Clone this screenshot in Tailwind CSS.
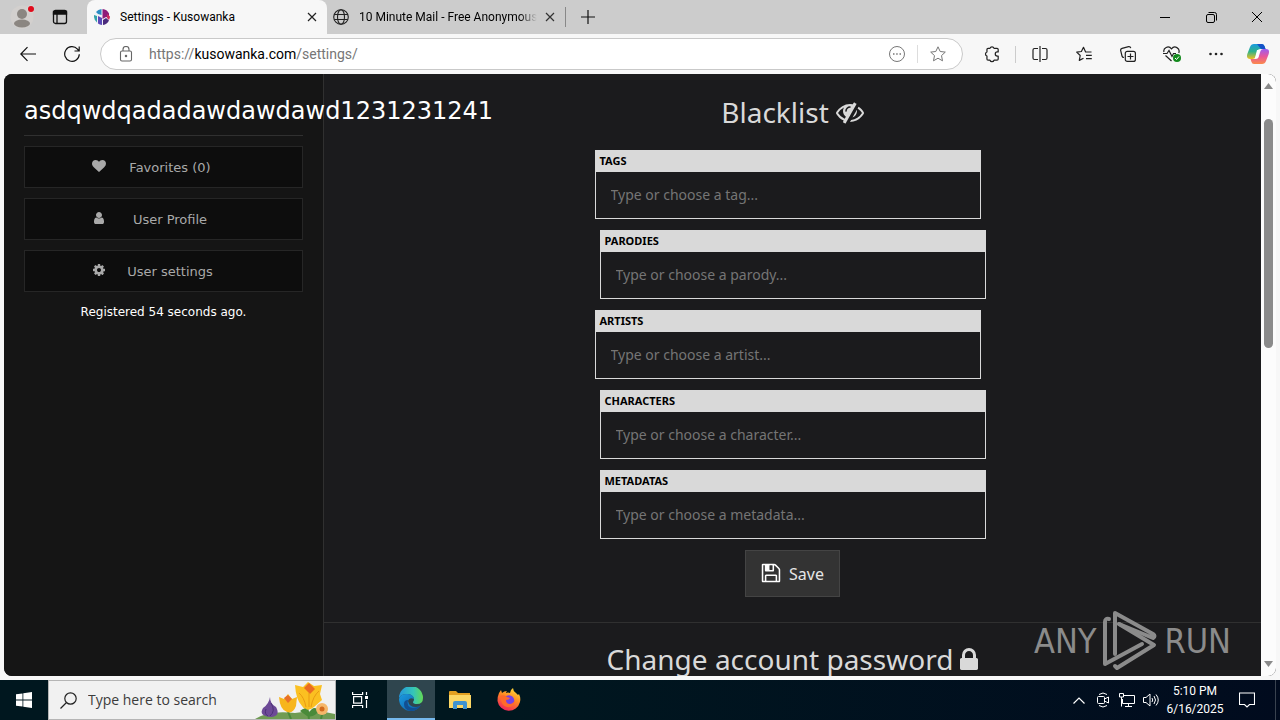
<!DOCTYPE html>
<html lang="en">
<head>
  <meta charset="UTF-8">
  <meta name="viewport" content="width=device-width, initial-scale=1.0">
  <title>Settings - Kusowanka</title>
  <script src="https://cdn.jsdelivr.net/npm/@tailwindcss/browser@4"></script>
</head>
<body class="flex flex-col h-screen overflow-hidden bg-[#f7f7f7] font-['Open_Sans',sans-serif] text-black">

  <!-- Tab strip -->
  <header class="flex h-[34px] shrink-0 bg-[#cccccc] font-['Roboto',sans-serif] text-xs">
    <div class="flex w-[87px] items-center">
      <button aria-label="Profile" class="ml-[10px] w-6">
        <svg class="w-6 h-6" viewBox="0 0 24 24">
          <circle cx="12" cy="12" r="11.5" fill="#d3d0ce"/>
          <circle cx="12" cy="9" r="5" fill="#8b8681"/>
          <ellipse cx="12" cy="18.500" rx="8" ry="4" fill="#8b8681"/>
          <circle cx="21" cy="4" r="4" fill="#d8d4d1"/>
          <circle cx="21" cy="4" r="3" fill="#e00b1c"/>
        </svg>
      </button>
      <button aria-label="Tab actions" class="ml-[18px]">
        <svg class="w-4 h-4" viewBox="0 0 16 16" fill="none" stroke="#111" stroke-width="1.3">
          <rect x="1.500" y="1.500" width="13" height="13" rx="2"/>
          <path d="M1.500 2.500h13v2.500h-13z" fill="#111"/>
          <path d="M5 5v9.500"/>
        </svg>
      </button>
    </div>
    <div class="flex w-60 items-center rounded-t-lg bg-[#f7f7f7] px-[7px]">
      <svg class="w-4 h-4 shrink-0" viewBox="0 0 16 16">
        <circle cx="8" cy="8" r="8" fill="#f1f1f6"/>
        <path d="M2 3A8 8 0 0 1 7.500 0v6L4 5z" fill="#2b8cc4"/>
        <path d="M8.500 0a8 8 0 0 1 6.500 4.500V9l-3-1-3.500 2z" fill="#8e1c78"/>
        <path d="M0 6l3 1v6.500A8 8 0 0 1 0 8z" fill="#35a3ab"/>
        <path d="M4 7l4 2v7a8 8 0 0 1-4-1.500z" fill="#5a49b8"/>
        <path d="M9 11l3-2 3 2.500A8 8 0 0 1 9 16z" fill="#4a2a7c"/>
        <path d="M13 5l3 2.500a8 8 0 0 1-1 3.500l-2-2z" fill="#cf2f5e"/>
      </svg>
      <span class="ml-[10px] grow truncate">Settings - Kusowanka</span>
      <button aria-label="Close tab" class="w-4">
        <svg class="mx-auto w-[10px] h-[10px]" viewBox="0 0 10 10" stroke="#222" stroke-width="1.2"><path d="M1 1l8 8M9 1l-8 8"/></svg>
      </button>
    </div>
    <div class="flex w-[239px] items-center pl-[6px]">
      <svg class="w-4 h-4 shrink-0" viewBox="0 0 16 16" fill="none" stroke="#222" stroke-width="1.1">
        <circle cx="8" cy="8" r="7.300"/><ellipse cx="8" cy="8" rx="3.500" ry="7.300"/><path d="M1.300 5.500h13.400M1.300 10.500h13.400"/>
      </svg>
      <span class="ml-[10px] w-[178px] overflow-hidden whitespace-nowrap [mask-image:linear-gradient(to_right,black_90%,transparent)]">10 Minute Mail - Free Anonymous</span>
      <button aria-label="Close tab" class="ml-[5px] w-4">
        <svg class="mx-auto w-[10px] h-[10px]" viewBox="0 0 10 10" stroke="#333" stroke-width="1.2"><path d="M1 1l8 8M9 1l-8 8"/></svg>
      </button>
      <span class="ml-auto h-5 w-px bg-[#888]"></span>
    </div>
    <button aria-label="New tab" class="w-11">
      <svg class="mx-auto w-[14px] h-[14px]" viewBox="0 0 14 14" stroke="#111" stroke-width="1.200"><path d="M7 0v14M0 7h14"/></svg>
    </button>
    <div class="ml-auto flex">
      <button aria-label="Minimize" class="w-[46px]"><svg class="mx-auto w-[10px] h-[10px]" viewBox="0 0 10 10" stroke="#000"><path d="M0 5.500h10"/></svg></button>
      <button aria-label="Restore" class="w-[46px]"><svg class="mx-auto w-[11px] h-[11px]" viewBox="0 0 11 11" fill="none" stroke="#000"><rect x=".5" y="2.500" width="8" height="8" rx="1.500"/><path d="M2.500 .5h6a2 2 0 0 1 2 2v6"/></svg></button>
      <button aria-label="Close" class="w-[46px]"><svg class="mx-auto w-[10px] h-[10px]" viewBox="0 0 10 10" stroke="#000"><path d="M0 0l10 10M10 0L0 10"/></svg></button>
    </div>
  </header>

  <!-- Toolbar -->
  <nav class="flex h-10 shrink-0 items-center">
    <button aria-label="Back" class="w-11 pl-3">
      <svg class="mx-auto w-4 h-4" viewBox="0 0 16 16" fill="none" stroke="#111" stroke-width="1.200"><path d="M16 8H.8M7.500 1.200L.8 8l6.700 6.800"/></svg>
    </button>
    <button aria-label="Refresh" class="ml-[6px] w-11">
      <svg class="mx-auto w-4 h-4" viewBox="0 0 16 16" fill="none" stroke="#111" stroke-width="1.200"><path d="M15.300 8.200A7.300 7.300 0 1 1 13.500 3.200L15 5M15.200 .5V5h-4.700"/></svg>
    </button>
    <div class="ml-[6px] flex h-8 grow items-center rounded-full border border-[#c9c9c9] bg-white pl-[18px] pr-4 font-['Roboto',sans-serif] text-sm">
      <svg class="w-[14px] h-4 shrink-0" viewBox="0 0 14 16" fill="none" stroke="#666" stroke-width="1.100"><rect x="1.500" y="5" width="11" height="10" rx="1.500"/><path d="M4 5V3.500a3 3 0 0 1 6 0V5"/><circle cx="7" cy="10" r=".7" fill="#666"/></svg>
      <a href="#" class="ml-4 grow text-[#767676]">https://<span class="text-black">kusowanka.com</span>/settings/</a>
      <button aria-label="Site options"><svg class="w-4 h-4" viewBox="0 0 16 16" fill="none" stroke="#777"><circle cx="8" cy="8" r="7.500"/><path d="M4 8h1.500M7.200 8h1.500M10.500 8H12" stroke-width="1.500"/></svg></button>
      <span class="mx-3 h-[18px] w-px bg-[#ddd]"></span>
      <button aria-label="Add to favorites"><svg class="w-4 h-4" viewBox="0 0 16 16" fill="none" stroke="#777" stroke-linejoin="round"><path d="M8 .8l2.200 4.700 5.100.6-3.800 3.500 1 5.200L8 12.200l-4.500 2.600 1-5.200L.7 6.100l5.100-.6z"/></svg></button>
    </div>
    <button aria-label="Extensions" class="ml-[7px] w-11"><svg class="mx-auto w-[18px] h-[18px]" viewBox="0 0 16 16" fill="none" stroke="#222" stroke-width="1.100" stroke-linejoin="round"><path d="M4.500 3H6.200a1.900 1.900 0 0 1 3.600 0H12.500a1 1 0 0 1 1 1V6.200h-.8a1.800 1.800 0 0 0 0 3.600h.8v2.700a1 1 0 0 1-1 1H9.800a1.900 1.900 0 0 1-3.600 0H4.500a1 1 0 0 1-1-1V9.800a1.900 1.900 0 0 1 0-3.600V4a1 1 0 0 1 1-1z"/></svg></button>
    <span class="ml-[1px] h-[17px] w-px bg-[#ccc]"></span>
    <button aria-label="Split screen" class="ml-[2px] w-11"><svg class="mx-auto w-4 h-4" viewBox="0 0 16 16" fill="none" stroke="#222" stroke-width="1.200"><path d="M6 2.500H2.500a1.500 1.500 0 0 0-1.500 1.500v8a1.500 1.500 0 0 0 1.500 1.500H6M10 2.500h3.500A1.500 1.500 0 0 1 15 4v8a1.500 1.500 0 0 1-1.500 1.500H10M8 0v16"/></svg></button>
    <button aria-label="Favorites" class="w-11"><svg class="mx-auto w-4 h-4" viewBox="0 0 16 16" fill="none" stroke="#222" stroke-width="1.200" stroke-linejoin="round"><path d="M15.500 6H9.600L7.500 1.300 5.400 5.500.7 6.100l3.500 3.400-.9 4.900 4.200-2.200M10 9.300h5.800M10 12.600h5.800"/></svg></button>
    <button aria-label="Collections" class="w-11"><svg class="mx-auto w-4 h-4" viewBox="0 0 16 16" fill="none" stroke="#222" stroke-width="1.200"><path d="M4 11.500A2 2 0 0 1 2 10L.7 4.700a2 2 0 0 1 1.400-2.400L8.600.7a2 2 0 0 1 2.200 1.400"/><path d="M10.500 7.500v6M7.500 10.500h6"/><rect x="5.300" y="5.300" width="10.100" height="10.100" rx="2"/></svg></button>
    <button aria-label="Browser essentials" class="w-11"><svg class="mx-auto w-[18px] h-4" viewBox="0 0 18 16" fill="none" stroke="#222" stroke-width="1.200"><path d="M1 6C-.2 2 5.500-1 8.500 2.800 11.500-1 17.500 2 15.800 7M2.500 9.500l6 5.500M0 7.500h4l2-3 3 6 1.500-3H13"/><circle cx="14" cy="12" r="4" fill="#138a1d" stroke="none"/><path d="M12 12l1.500 1.500 2.500-3" stroke="#fff" stroke-width="1"/></svg></button>
    <button aria-label="Settings and more" class="w-11"><svg class="mx-auto w-[14px] h-4" viewBox="0 0 14 16" fill="#222"><circle cx="1.500" cy="8" r="1.300"/><circle cx="7" cy="8" r="1.300"/><circle cx="12.500" cy="8" r="1.300"/></svg></button>
    <button aria-label="Copilot" class="w-[42px] pr-[2px]">
      <svg class="mx-auto w-[22px] h-5" viewBox="0 0 22 20">
        <defs>
          <linearGradient id="cpA" x1="0" y1="0" x2="0" y2="1"><stop stop-color="#1a9be0"/><stop offset=".5" stop-color="#2fb38a"/><stop offset="1" stop-color="#f0c020"/></linearGradient>
          <linearGradient id="cpB" x1="0" y1="0" x2="0" y2="1"><stop stop-color="#9b5cf0"/><stop offset=".5" stop-color="#e8569b"/><stop offset="1" stop-color="#fb8a4a"/></linearGradient>
        </defs>
        <path d="M7 0h8q2 0 2.700 2.500L18.500 5H13q-2 0-2.600 2L8.500 13q-.8 2-3 2H3q-4 0-2.700-5L3 3Q4 0 7 0z" fill="url(#cpA)"/>
        <path d="M10 0h5q2 0 2.700 2.500L18.500 5H14z" fill="#1552c8"/>
        <path d="M15 20H7q-2 0-2.700-2.500L3.500 15H9q2 0 2.600-2L13.500 7q.8-2 3-2H19q4 0 2.700 5L19 17q-1 3-4 3z" fill="url(#cpB)"/>
        <path d="M10 6h3l-2 8H8z" fill="#fff"/>
      </svg>
    </button>
  </nav>

  <!-- Page -->
  <div class="mx-1 mb-1 flex min-h-0 grow overflow-hidden rounded-lg bg-[#1b1b1d]">
    <aside class="w-80 shrink-0 border-r border-[#303030] bg-[#151515] px-5 pt-[17px] font-['DejaVu_Sans',sans-serif]">
      <h2 class="relative z-10 whitespace-nowrap text-2xl leading-10 text-white">asdqwdqadadawdawdawd1231231241</h2>
      <hr class="mt-1 mb-[10px] border-[#303030]">
      <div class="flex flex-col gap-[10px] text-[13px] text-[#a9a9a9]">
        <a href="#" class="flex h-[42px] items-center border border-[#262626] bg-[#0d0d0d] pl-14">
          <svg class="mx-[11px] mb-[2px] w-[14px] h-[14px]" viewBox="0 0 1792 1792" fill="currentColor"><path d="M896 1664q-26 0-44-18l-624-602q-10-8-27.500-26t-55.500-65.500-68-97.500-53.500-121-23.500-138q0-220 127-344t351-124q62 0 126.500 21.500t120 58 95.500 68.500 76 68q36-36 76-68t95.500-68.500 120-58 126.500-21.500q224 0 351 124t127 344q0 221-229 450l-623 600q-18 18-44 18z"/></svg>
          <span class="w-[106px] pt-[2px] text-center">Favorites (0)</span>
        </a>
        <a href="#" class="flex h-[42px] items-center border border-[#262626] bg-[#0d0d0d] pl-14">
          <svg class="mx-[11px] mb-[2px] w-[14px] h-[14px]" viewBox="0 0 1792 1792" fill="currentColor"><path d="M1536 1399q0 109-62.500 187t-150.500 78h-854q-88 0-150.500-78t-62.500-187q0-85 8.500-160.500t31.500-152 58.500-131 94-89 134.500-34.500q131 128 313 128t313-128q76 0 134.500 34.500t94 89 58.500 131 31.500 152 8.500 160.500zm-256-887q0 159-112.500 271.500t-271.500 112.500-271.500-112.500-112.500-271.500 112.500-271.500 271.500-112.500 271.500 112.500 112.500 271.500z"/></svg>
          <span class="w-[106px] pt-[2px] text-center">User Profile</span>
        </a>
        <a href="#" class="flex h-[42px] items-center border border-[#262626] bg-[#0d0d0d] pl-14">
          <svg class="mx-[11px] mb-[2px] w-[14px] h-[14px]" viewBox="0 0 1792 1792" fill="currentColor"><path d="M1152 896q0-106-75-181t-181-75-181 75-75 181 75 181 181 75 181-75 75-181zm512-109v222q0 12-8 23t-20 13l-185 28q-19 54-39 91 35 50 107 138 10 12 10 25t-9 23q-27 37-99 108t-94 71q-12 0-26-9l-138-108q-44 23-91 38-16 136-29 186-7 28-36 28h-222q-14 0-24.500-8.500t-11.500-21.500l-28-184q-49-16-90-37l-141 107q-10 9-25 9-14 0-25-11-126-114-165-168-7-10-7-23 0-12 8-23 15-21 51-66.500t54-70.500q-27-50-41-99l-183-27q-13-2-21-12.500t-8-23.500v-222q0-12 8-23t19-13l186-28q14-46 39-92-40-57-107-138-10-12-10-24 0-10 9-23 26-36 98.500-107.500t94.500-71.500q13 0 26 10l138 107q44-23 91-38 16-136 29-186 7-28 36-28h222q14 0 24.500 8.500t11.500 21.500l28 184q49 16 90 37l142-107q9-9 24-9 13 0 25 10 129 119 165 170 7 8 7 22 0 12-8 23-15 21-51 66.500t-54 70.500q26 50 41 98l183 28q13 2 21 12.500t8 23.500z"/></svg>
          <span class="w-[106px] pt-[2px] text-center">User settings</span>
        </a>
      </div>
      <p class="mt-[10px] text-center text-xs leading-5 text-white">Registered 54 seconds ago.</p>
    </aside>

    <main class="relative min-w-0 grow font-['Noto_Sans',sans-serif] text-[#d9d9d9]">
      <form class="flex flex-col items-center border-b border-[#303030] pb-[25px]">
        <h1 class="mt-[18px] mb-[18px] flex items-center gap-[7px] text-[28px] leading-10">Blacklist
          <svg class="w-7 h-7" viewBox="0 0 1792 1792" fill="currentColor"><path d="M555 1335l78-141q-87-63-136-159t-49-203q0-121 61-225-229 117-381 353 167 258 427 375zm389-759q0-20-14-34t-34-14q-125 0-214.500 89.500t-89.500 214.500q0 20 14 34t34 14 34-14 14-34q0-86 61-147t147-61q20 0 34-14t14-34zm363-191q0 7-1 9-106 189-316 567t-315 566l-49 89q-10 16-28 16-12 0-134-70-16-10-16-28 0-12 44-87-143-65-263.500-173t-208.500-245q-20-31-20-69t20-69q153-235 380-371t496-136q89 0 180 17l54-97q10-16 28-16 5 0 18 6t31 15.500 33 18.500 31.500 18.500 19.500 11.500q16 10 16 27zm37 447q0 139-79 253.500t-209 164.500l280-502q8 45 8 84zm448 128q0 35-20 69-39 64-109 145-150 172-347.500 267t-419.500 95l74-132q212-18 392.500-137t301.500-307q-115-179-282-294l63-112q95 64 182.500 153t144.500 184q20 34 20 69z"/></svg>
        </h1>
        <div class="mb-[11px] mr-[10px] w-[386px] border border-[#d9d9d9]">
          <label for="tags" class="block bg-[#d9d9d9] px-1 pb-px text-[11px] font-bold leading-5 text-black">TAGS</label>
          <input id="tags" type="text" placeholder="Type or choose a tag..." class="block h-[46px] w-full px-[15px] pb-[2px] text-sm placeholder:text-[#757575]">
        </div>
        <div class="mb-[11px] w-[386px] border border-[#d9d9d9]">
          <label for="parodies" class="block bg-[#d9d9d9] px-1 pb-px text-[11px] font-bold leading-5 text-black">PARODIES</label>
          <input id="parodies" type="text" placeholder="Type or choose a parody..." class="block h-[46px] w-full px-[15px] pb-[2px] text-sm placeholder:text-[#757575]">
        </div>
        <div class="mb-[11px] mr-[10px] w-[386px] border border-[#d9d9d9]">
          <label for="artists" class="block bg-[#d9d9d9] px-1 pb-px text-[11px] font-bold leading-5 text-black">ARTISTS</label>
          <input id="artists" type="text" placeholder="Type or choose a artist..." class="block h-[46px] w-full px-[15px] pb-[2px] text-sm placeholder:text-[#757575]">
        </div>
        <div class="mb-[11px] w-[386px] border border-[#d9d9d9]">
          <label for="characters" class="block bg-[#d9d9d9] px-1 pb-px text-[11px] font-bold leading-5 text-black">CHARACTERS</label>
          <input id="characters" type="text" placeholder="Type or choose a character..." class="block h-[46px] w-full px-[15px] pb-[2px] text-sm placeholder:text-[#757575]">
        </div>
        <div class="mb-[11px] w-[386px] border border-[#d9d9d9]">
          <label for="metadatas" class="block bg-[#d9d9d9] px-1 pb-px text-[11px] font-bold leading-5 text-black">METADATAS</label>
          <input id="metadatas" type="text" placeholder="Type or choose a metadata..." class="block h-[46px] w-full px-[15px] pb-[2px] text-sm placeholder:text-[#757575]">
        </div>
        <button type="submit" class="flex h-[47px] items-center gap-2 border border-[#444] bg-[#333] px-[15px] text-base text-[#e6e6e6]">
          <svg class="mb-[2px] w-5 h-5 text-white" viewBox="64 64 1664 1664" fill="currentColor"><path d="M512 1536h768v-384h-768v384zm896 0h128v-896q0-14-10-38.500t-20-34.500l-281-281q-10-10-34-20t-39-10v416q0 40-28 68t-68 28h-576q-40 0-68-28t-28-68v-416h-128v1280h128v-416q0-40 28-68t68-28h832q40 0 68 28t28 68v416zm-384-928v-320q0-13-9.500-22.500t-22.500-9.500h-192q-13 0-22.500 9.500t-9.500 22.500v320q0 13 9.500 22.500t22.500 9.500h192q13 0 22.500-9.500t9.500-22.500zm640 32v928q0 40-28 68t-68 28h-1344q-40 0-68-28t-28-68v-1344q0-40 28-68t68-28h928q40 0 88 20t76 48l280 280q28 28 48 76t20 88z"/></svg>
          Save
        </button>
      </form>
      <h1 class="mt-4 flex items-center justify-center gap-[7px] text-[28px] leading-10">Change account password
        <svg class="w-[18px] h-7" viewBox="320 -64 1152 1792" fill="currentColor"><path d="M640 768h512v-192q0-106-75-181t-181-75-181 75-75 181v192zm832 96v576q0 40-28 68t-68 28h-960q-40 0-68-28t-28-68v-576q0-40 28-68t68-28h32v-192q0-184 132-316t316-132 316 132 132 316v192h32q40 0 68 28t28 68z"/></svg>
      </h1>

      <!-- Watermark -->
      <div class="absolute bottom-1 right-[30px] flex items-center gap-[6px] font-['Liberation_Sans_Narrow','DejaVu_Sans_Condensed',sans-serif] text-[34px] leading-none text-[#8b8b8b]">
        ANY
        <svg class="w-[56px] h-[62px]" viewBox="0 0 56 62" fill="none" stroke="currentColor" stroke-width="4" stroke-linejoin="round" stroke-linecap="round">
          <path d="M7 9Q3 8 3 12V54L40 34"/>
          <path d="M13 44V3L51 24Q54 26 51 28L17 14"/>
          <path d="M17 14L52 35L15 58L13 56"/>
        </svg>
        RUN
      </div>
    </main>

    <!-- Scrollbar -->
    <div class="flex w-[15px] shrink-0 flex-col items-center bg-[#fcfcfc] py-[9px]">
      <svg class="w-[9px] h-[6px]" viewBox="0 0 9 6" fill="#8a8a8a"><path d="M4.500 0L9 6H0z"/></svg>
      <div class="mt-[30px] h-[229px] w-[9px] rounded-full bg-[#8b8b8b]"></div>
      <svg class="mt-auto w-[9px] h-[6px]" viewBox="0 0 9 6" fill="#8a8a8a"><path d="M4.500 6L0 0h9z"/></svg>
    </div>
  </div>

  <!-- Taskbar -->
  <footer class="flex h-10 shrink-0 items-center bg-linear-to-r from-[#00171f] from-40% to-[#010b1e] text-white">
    <button aria-label="Start" class="w-12">
      <svg class="mx-auto w-4 h-4" viewBox="0 0 16 16" fill="#fff"><path d="M0 2.300L6.500 1.400v6.200H0zM7.300 1.300L16 0v7.600H7.300zM0 8.400h6.500v6.200L0 13.700zM7.300 8.400H16V16l-8.700-1.300z"/></svg>
    </button>
    <div class="relative flex h-10 w-72 items-center border border-[#b5b5b5] bg-[#f1f1f1] pl-[11px]">
      <svg class="w-[17px] h-[17px] shrink-0" viewBox="0 0 17 17" fill="none" stroke="#222" stroke-width="1.200"><circle cx="10.500" cy="6.500" r="5.700"/><path d="M6.500 10.500L.5 16.500"/></svg>
      <input type="text" aria-label="Search" placeholder="Type here to search" class="ml-[11px] w-40 text-sm placeholder:text-[#3c3c3c]">
      <svg class="absolute bottom-0 right-0 h-[38px] w-20" viewBox="0 0 80 38">
        <path d="M0 38Q14 29 40 32Q62 28 80 33V38z" fill="#6f9b53"/>
        <path d="M52 25l2 13M32 28l4 10M68 29l-2 9" stroke="#4a8a3a" stroke-width="2"/>
        <path d="M15 16q0 7 6 10 5 9-5 10-13-1-8-9 6-4 7-11z" fill="#6d4a97"/>
        <path d="M16 22q5 8-1 13M11 28q-2 5 2 7" stroke="#4c3178" fill="none"/>
        <path d="M24 16l5 2 4-5 4 5 5-2-1 9q-3 8-9 6-7-2-8-15z" fill="#f7b51c"/>
        <path d="M29 17l4-3 4 4-4 4z" fill="#e8702a"/>
        <path d="M40 4l8 2 5-5 6 4 8-1-2 9 2 6-8 7q-7 6-12-1-6-6-7-21z" fill="#fbc021"/>
        <path d="M49 7l5-5 6 6-5 5z" fill="#ea6c22"/>
        <path d="M44 12q5 4 7 14M64 10q-6 5-8 16M54 12v14" stroke="#e99a12" fill="none"/>
        <path d="M45 30q6-6 9 2 4-8 10-3-4 8-12 6z" fill="#4a8a3a"/>
        <circle cx="67" cy="28" r="6" fill="#f6b76a"/><circle cx="67" cy="28" r="2.500" fill="#d36a1d"/>
      </svg>
    </div>
    <button aria-label="Task view" class="w-[51px] pr-[3px]">
      <svg class="mx-auto w-4 h-4" viewBox="0 0 16 16" fill="none" stroke="#fff" stroke-width="1.200"><path d="M.6 0v2.500h10V0M.6 16v-2.500h10V16M14.500 0v3M14.500 8v8"/><rect x="1.600" y="4.600" width="8" height="6.500"/><path d="M13 4h3v3h-3z" fill="#fff" stroke="none"/></svg>
    </button>
    <button aria-label="Microsoft Edge" class="h-10 w-12 border-b-2 border-[#76b9ed] bg-[#2f454e]">
      <svg class="mx-auto w-6 h-6" viewBox="0 0 24 24">
        <defs>
          <linearGradient id="edA" x1="0" y1="0" x2="1" y2="0"><stop stop-color="#2496dc"/><stop offset=".6" stop-color="#35c5b8"/><stop offset="1" stop-color="#62d955"/></linearGradient>
          <linearGradient id="edB" x1="0" y1="0" x2="1" y2="1"><stop stop-color="#1b9be0"/><stop offset="1" stop-color="#0c59a4"/></linearGradient>
        </defs>
        <path d="M0 11A12 12 0 0 1 24 11q0 6-6 6-4 0-4-2 1-1 1-3-1-5-7-5-6 0-8 4z" fill="url(#edA)"/>
        <path d="M0 12Q1 7 8 7q6 0 7 5-5-2-6 2 1 6 8 6 3 0 5-2-4 6-10 6A12 12 0 0 1 0 12z" fill="url(#edB)"/>
        <path d="M9 13q-2 7 5 8 5 0 8-3-4 6-10 6-7-1-7-7 0-4 4-4z" fill="#124f91"/>
      </svg>
    </button>
    <button aria-label="File Explorer" class="w-[50px]">
      <svg class="mx-auto w-[22px] h-5" viewBox="0 0 22 20"><path d="M0 2q0-1 1-1h6l2 2H21v5H0z" fill="#e3a021"/><path d="M0 5h22v13H0z" fill="#fcd765"/><path d="M4 19v-6q0-2 2-2h10q2 0 2 2v6h-4v-4H8v4z" fill="#3f93d0"/></svg>
    </button>
    <button aria-label="Firefox" class="w-12">
      <svg class="mx-auto w-6 h-6" viewBox="0 0 24 24">
        <defs>
          <linearGradient id="ffA" x1=".8" y1="0" x2=".3" y2="1"><stop stop-color="#ffe03a"/><stop offset=".45" stop-color="#ff8a22"/><stop offset="1" stop-color="#f0225c"/></linearGradient>
        </defs>
        <path d="M2 5l2-3 1 3q2-2 5-2-1 1-1 2 2-1 4 0 0-3 3-5 0 3 3 5l2 2 1-1q2 4 1 8A11.500 11.500 0 0 1 .5 13Q.5 8 2 5z" fill="url(#ffA)"/>
        <circle cx="12" cy="12.500" r="5.200" fill="#7542e5"/>
        <path d="M3 8q4-2 7 1l3 1q-1 2-4 2 0 4 4 4 4-1 5-4-1 8-8 7-6-1-7-11z" fill="#ff6a2a"/>
      </svg>
    </button>

    <div class="ml-auto flex h-full items-center">
      <button aria-label="Show hidden icons" class="w-6"><svg class="mx-auto w-3 h-[7px]" viewBox="0 0 12 7" fill="none" stroke="#fff" stroke-width="1.200"><path d="M.5 6.500L6 1l5.500 5.500"/></svg></button>
      <button aria-label="Meet now" class="w-6"><svg class="mx-auto w-3 h-4" viewBox="0 0 12 16" fill="none" stroke="#fff"><rect x=".5" y="4.500" width="7" height="7" rx="1"/><path d="M7.500 7l4-2v6l-4-2M2 2.500q4-3 8 0M2 13.500q4 3 8 0"/></svg></button>
      <button aria-label="Network" class="w-6"><svg class="mx-auto w-4 h-[14px]" viewBox="0 0 16 14" fill="none" stroke="#fff"><path d="M5 2.500h10.500v8H3.500V6M9.500 10.500v3M6 13.500h7"/><path d="M.5 .5h4v3.500h-4zM2.500 4v9.500"/></svg></button>
      <button aria-label="Volume" class="w-6"><svg class="mx-auto w-4 h-[14px]" viewBox="0 0 16 14" fill="none" stroke="#fff"><path d="M.5 4.500h2.500L7 1v12L3 9.500H.5zM9 5q1.500 2 0 4M11 3q3 4 0 8M13 1.500q4.500 5.500 0 11"/></svg></button>
      <div class="w-16 text-center font-['Roboto',sans-serif] text-xs leading-[18px]">5:10 PM<br>6/16/2025</div>
      <button aria-label="Notifications" class="w-10"><svg class="mx-auto w-4 h-4" viewBox="0 0 16 16" fill="none" stroke="#fff" stroke-width="1.100"><path d="M.5 1h15v11.500H10.500L8 15l-2.500-2.500H.5z"/></svg></button>
      <span class="ml-2 mr-1 h-full w-px bg-[#39424f]"></span>
    </div>
  </footer>
</body>
</html>
